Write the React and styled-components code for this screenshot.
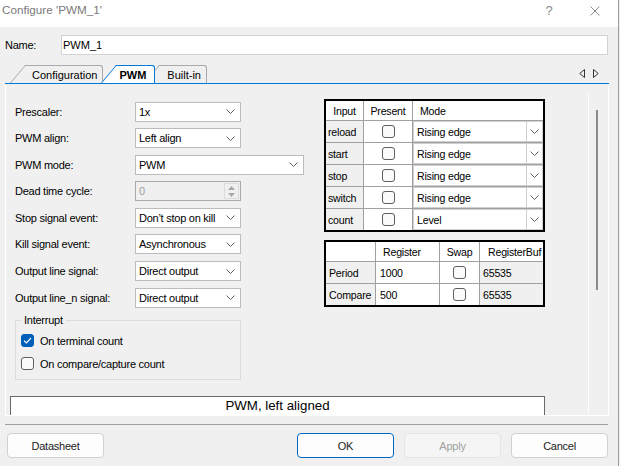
import React from 'react';
import styled, { createGlobalStyle } from 'styled-components';

const GlobalStyle = createGlobalStyle`
  html, body {
    margin: 0;
    padding: 0;
    background: #f0f0f0;
  }
  body {
    font-family: 'Liberation Sans', Arial, sans-serif;
    font-size: 11px;
    letter-spacing: -0.25px;
    color: #000;
  }
  * {
    box-sizing: border-box;
  }
`;

const Window = styled.div`
  width: 619px;
  height: 466px;
  border-right: 1px solid #9c9c9c;
  background: #f0f0f0;
  overflow: hidden;
`;

const TitleBar = styled.div`
  height: 27px;
  background: #fff;
  display: flex;
  align-items: flex-start;
  color: #7a7a7a;
`;

const Title = styled.div`
  flex: 1;
  padding: 3px 0 0 2px;
  font-size: 11.7px;
  letter-spacing: 0;
  line-height: 14px;
`;

const TitleButton = styled.div`
  width: 46px;
  height: 27px;
  display: flex;
  align-items: center;
  justify-content: center;
  padding-bottom: 6px;
  font-size: 13px;
  color: #8a8a8a;
`;

const Body = styled.div`
  padding: 0 9px 0 5px;
`;

const NameRow = styled.div`
  display: flex;
  align-items: center;
  margin-top: 8px;
  padding-right: 1px;
`;

const NameLabel = styled.div`
  width: 56px;
`;

const NameInput = styled.input`
  flex: 1;
  height: 20px;
  border: 1px solid #d2d2d2;
  background: #fff;
  font: inherit;
  letter-spacing: 0;
  padding: 0 0 0 1px;
  outline: none;
`;

const TabStrip = styled.div`
  margin-top: 10px;
  height: 19px;
  display: flex;
  align-items: flex-end;
  justify-content: space-between;
  border-bottom: 1px solid #0078d7;
`;

const Tabs = styled.div`
  display: flex;
  padding-left: 7px;
  height: 18px;
  letter-spacing: 0;
`;

const Tab = styled.div`
  position: relative;
  z-index: ${p => (p.$active ? 3 : p.$z)};
  height: 18px;
  display: flex;
  align-items: center;
  margin-left: ${p => p.$ml}px;
  padding: ${p => p.$pad};
  background: ${p => (p.$active ? '#fff' : '#f0f0f0')};
  border-top: 1px solid ${p => (p.$active ? '#0078d7' : '#a9a9a9')};
  border-right: 1px solid ${p => (p.$active ? '#0078d7' : '#a9a9a9')};
  border-top-right-radius: 3px;
  font-weight: ${p => (p.$active ? 'bold' : 'normal')};

  &::before {
    content: '';
    position: absolute;
    z-index: -1;
    top: -1px;
    bottom: 0;
    left: -15px;
    width: 30px;
    background: inherit;
    border-left: 1px solid ${p => (p.$active ? '#0078d7' : '#a9a9a9')};
    border-top: 1px solid ${p => (p.$active ? '#0078d7' : '#a9a9a9')};
    transform: skewX(-40deg);
    transform-origin: bottom left;
  }
`;

const TabArrows = styled.div`
  display: flex;
  gap: 8px;
  padding-right: 10px;
  margin-bottom: 5px;
`;

const Panel = styled.div`
  height: 332px;
  display: flex;
  border: 1px solid #fff;
  border-top: none;
`;

const Scroll = styled.div`
  flex: 1;
  overflow: hidden;
  padding: 15px 0 0 4px;
`;

const TopRow = styled.div`
  display: flex;
  align-items: flex-start;
`;

const Form = styled.div`
  flex: none;
  width: 314px;
  margin-top: 2.5px;
  padding-left: 5px;
  display: grid;
  grid-template-columns: 120px auto;
  grid-template-rows: repeat(8, 20px) auto;
  row-gap: 6.6px;
  align-items: center;
`;

const Label = styled.div`
  white-space: nowrap;
`;

const Combo = styled.div`
  width: ${p => p.$w}px;
  height: 20px;
  display: flex;
  align-items: center;
  justify-content: space-between;
  background: #fff;
  border: 1px solid #bcbcbc;
  padding: 0 5px 0 3px;
  white-space: nowrap;
`;

const Spin = styled.div`
  width: ${p => p.$w}px;
  height: 20px;
  display: flex;
  align-items: center;
  border: 1px solid #a9a9a9;
  background: #f0f0f0;
  color: #a0a0a0;
  padding-left: 3px;
`;

const SpinValue = styled.div`
  flex: 1;
`;

const SpinButtons = styled.div`
  width: 15px;
  height: 16px;
  margin-right: 1px;
  border: 1px solid #dcdcdc;
  display: flex;
  flex-direction: column;
  align-items: center;
  justify-content: space-around;
`;

const Group = styled.fieldset`
  grid-column: 1 / -1;
  justify-self: start;
  width: 226px;
  margin: 0;
  min-width: 0;
  border: 1px solid #dcdcdc;
  padding: 0 5px 9px 5px;
`;

const Legend = styled.legend`
  padding: 0 3px;
  line-height: 13px;
`;

const CheckRow = styled.div`
  display: flex;
  align-items: center;
  gap: 6px;
  height: 13px;
  margin-top: ${p => p.$mt}px;
`;

const Box = styled.span`
  width: 13px;
  height: 13px;
  flex: none;
  display: inline-flex;
  align-items: center;
  justify-content: center;
  border-radius: 3px;
  border: 1px solid ${p => (p.$checked ? '#005fb8' : '#5e5e5e')};
  background: ${p => (p.$checked ? '#005fb8' : '#fbfbfb')};
`;

const Tables = styled.div`
  flex: none;
  width: 221px;
  display: flex;
  flex-direction: column;
  gap: 8px;
  font-size: 10.6px;
  letter-spacing: -0.2px;
`;

const Grid = styled.div`
  display: grid;
  grid-template-columns: ${p => p.$cols};
  border: 2px solid #000;
  background: #fff;
`;

const Cell = styled.div`
  height: ${p => p.$h}px;
  display: flex;
  align-items: center;
  justify-content: ${p => p.$align || 'flex-start'};
  padding-left: ${p => p.$pl || 0}px;
  background: ${p => p.$bg || '#fff'};
  border-right: ${p => (p.$end ? 'none' : '1px solid #a0a0a0')};
  border-bottom: ${p => (p.$last ? 'none' : '1px solid #a0a0a0')};
  white-space: nowrap;
  overflow: hidden;
`;

const TableCombo = styled.div`
  flex: 1;
  align-self: stretch;
  display: flex;
  align-items: center;
  background: #fff;
  border: 1px solid #d0d0d0;
`;

const TableComboText = styled.div`
  flex: 1;
  padding-left: 3px;
`;

const DropButton = styled.div`
  width: 16px;
  align-self: stretch;
  display: flex;
  align-items: center;
  justify-content: center;
  border-left: 1px solid #d0d0d0;
`;

const Description = styled.div`
  margin-top: 16px;
  width: 535px;
  height: 30px;
  border: 1px solid #6a6a6a;
  background: #fff;
  text-align: center;
  font-size: 13.3px;
  letter-spacing: 0;
  line-height: 16px;
  padding-top: 1px;
`;

const ScrollBar = styled.div`
  width: 20px;
  margin: 9px 0 2px 0;
  border-left: 1px solid #fff;
  padding: 17px 0 0 7px;
`;

const Thumb = styled.div`
  width: 2px;
  height: 180px;
  background: #8a8a8a;
`;

const Separator = styled.div`
  margin: 8px 1px 0 0;
  height: 1px;
  background: #a0a0a0;
`;

const ButtonRow = styled.div`
  display: flex;
  gap: 10px;
  margin-top: 8px;
  padding: 0 1px 0 2px;
`;

const Spacer = styled.div`
  flex: 1;
`;

const Button = styled.div`
  width: 97px;
  height: 25px;
  display: flex;
  align-items: center;
  justify-content: center;
  border-radius: 4px;
  border: 1px solid ${p => (p.$primary ? '#0067c0' : p.$disabled ? '#e5e5e5' : '#d0d0d0')};
  background: ${p => (p.$disabled ? '#f5f5f5' : '#fdfdfd')};
  color: ${p => (p.$disabled ? '#a0a0a0' : '#1b1b1b')};
`;

const Chevron = () => (
  <svg width="9" height="5" viewBox="0 0 9 5">
    <polyline points="0.5,0.5 4.5,4.5 8.5,0.5" fill="none" stroke="#606060" strokeWidth="1" />
  </svg>
);

const Check = () => (
  <svg width="9" height="7" viewBox="0 0 9 7">
    <polyline points="1,3.6 3.4,6 8,1" fill="none" stroke="#fff" strokeWidth="1.2" />
  </svg>
);

const formRows = [
  { label: 'Prescaler:', value: '1x', w: 106 },
  { label: 'PWM align:', value: 'Left align', w: 106 },
  { label: 'PWM mode:', value: 'PWM', w: 169 },
  { label: 'Dead time cycle:', value: '0', w: 106, spin: true },
  { label: 'Stop signal event:', value: 'Don\u2019t stop on kill', w: 106 },
  { label: 'Kill signal event:', value: 'Asynchronous', w: 106 },
  { label: 'Output line signal:', value: 'Direct output', w: 106 },
  { label: 'Output line_n signal:', value: 'Direct output', w: 106 },
];

const inputs = [
  ['reload', 'Rising edge'],
  ['start', 'Rising edge'],
  ['stop', 'Rising edge'],
  ['switch', 'Rising edge'],
  ['count', 'Level'],
];

const registers = [
  ['Period', '1000', '65535'],
  ['Compare', '500', '65535'],
];

const InputTable = () => (
  <Grid $cols="38px 49px 130px">
    <Cell $h={20} $align="center">Input</Cell>
    <Cell $h={20} $align="center">Present</Cell>
    <Cell $h={20} $pl={7} $end>Mode</Cell>
    {inputs.map(([name, mode], i) => {
      const last = i === inputs.length - 1;
      return (
        <React.Fragment key={name}>
          <Cell $h={last ? 21 : 22} $pl={2} $bg="#f0f0f0" $last={last}>{name}</Cell>
          <Cell $h={last ? 21 : 22} $align="center" $last={last}><Box /></Cell>
          <Cell $h={last ? 21 : 22} $end $last={last}>
            <TableCombo>
              <TableComboText>{mode}</TableComboText>
              <DropButton><Chevron /></DropButton>
            </TableCombo>
          </Cell>
        </React.Fragment>
      );
    })}
  </Grid>
);

const RegisterTable = () => (
  <Grid $cols="50px 64px 40px 63px">
    <Cell $h={20} />
    <Cell $h={20} $pl={7}>Register</Cell>
    <Cell $h={20} $align="center">Swap</Cell>
    <Cell $h={20} $pl={8} $end>RegisterBuf</Cell>
    {registers.map(([name, reg, buf], i) => {
      const last = i === registers.length - 1;
      return (
        <React.Fragment key={name}>
          <Cell $h={last ? 21 : 22} $pl={3} $bg="#f0f0f0" $last={last}>{name}</Cell>
          <Cell $h={last ? 21 : 22} $pl={4} $last={last}>{reg}</Cell>
          <Cell $h={last ? 21 : 22} $align="center" $last={last}><Box /></Cell>
          <Cell $h={last ? 21 : 22} $pl={3} $bg="#f0f0f0" $end $last={last}>{buf}</Cell>
        </React.Fragment>
      );
    })}
  </Grid>
);

export default function App() {
  return (
    <Window>
      <GlobalStyle />
      <TitleBar>
        <Title>Configure 'PWM_1'</Title>
        <TitleButton>?</TitleButton>
        <TitleButton>
          <svg width="10" height="10" viewBox="0 0 10 10">
            <path d="M0.5 0.5 L9.5 9.5 M9.5 0.5 L0.5 9.5" stroke="#8a8a8a" strokeWidth="1" />
          </svg>
        </TitleButton>
      </TitleBar>
      <Body>
        <NameRow>
          <NameLabel>Name:</NameLabel>
          <NameInput readOnly value="PWM_1" />
        </NameRow>
        <TabStrip>
          <Tabs>
            <Tab $ml={13} $z={2} $pad="0 5px 0 7px">Configuration</Tab>
            <Tab $ml={13} $active $pad="0 8px 0 3px">PWM</Tab>
            <Tab $ml={4} $z={1} $pad="0 5px 0 8px">Built-in</Tab>
          </Tabs>
          <TabArrows>
            <svg width="6" height="9" viewBox="0 0 6 9">
              <polygon points="5.5,0.5 0.8,4.5 5.5,8.5" fill="none" stroke="#333" strokeWidth="1" />
            </svg>
            <svg width="6" height="9" viewBox="0 0 6 9">
              <polygon points="0.5,0.5 5.2,4.5 0.5,8.5" fill="none" stroke="#333" strokeWidth="1" />
            </svg>
          </TabArrows>
        </TabStrip>
        <Panel>
          <Scroll>
            <TopRow>
              <Form>
                {formRows.map(row => (
                  <React.Fragment key={row.label}>
                    <Label>{row.label}</Label>
                    {row.spin ? (
                      <Spin $w={row.w}>
                        <SpinValue>{row.value}</SpinValue>
                        <SpinButtons>
                          <svg width="7" height="4" viewBox="0 0 7 4"><polygon points="3.5,0 7,4 0,4" fill="#a8a8a8" /></svg>
                          <svg width="7" height="4" viewBox="0 0 7 4"><polygon points="0,0 7,0 3.5,4" fill="#a8a8a8" /></svg>
                        </SpinButtons>
                      </Spin>
                    ) : (
                      <Combo $w={row.w}>
                        <span>{row.value}</span>
                        <Chevron />
                      </Combo>
                    )}
                  </React.Fragment>
                ))}
                <Group>
                  <Legend>Interrupt</Legend>
                  <CheckRow $mt={7}>
                    <Box $checked><Check /></Box>
                    On terminal count
                  </CheckRow>
                  <CheckRow $mt={10}>
                    <Box />
                    On compare/capture count
                  </CheckRow>
                </Group>
              </Form>
              <Tables>
                <InputTable />
                <RegisterTable />
              </Tables>
            </TopRow>
            <Description>PWM, left aligned</Description>
          </Scroll>
          <ScrollBar>
            <Thumb />
          </ScrollBar>
        </Panel>
        <Separator />
        <ButtonRow>
          <Button>Datasheet</Button>
          <Spacer />
          <Button $primary>OK</Button>
          <Button $disabled>Apply</Button>
          <Button>Cancel</Button>
        </ButtonRow>
      </Body>
    </Window>
  );
}
